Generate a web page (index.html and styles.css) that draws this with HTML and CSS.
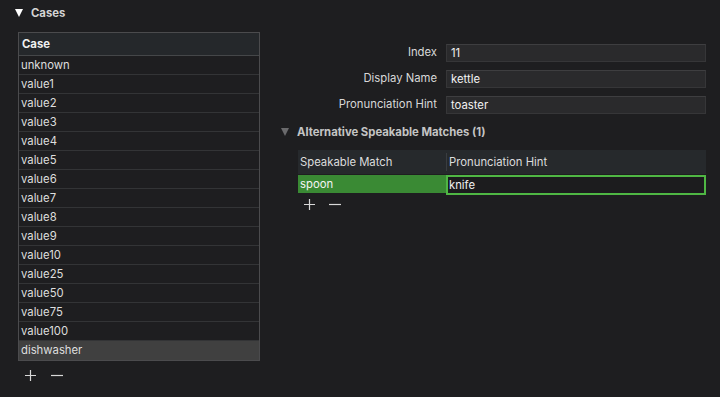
FILE: index.html
```html
<!DOCTYPE html>
<html>
<head>
<meta charset="utf-8">
<link rel="stylesheet" href="styles.css">
</head>
<body>
<div class="section-head">
  <span class="tri"></span><span class="section-title">Cases</span>
</div>
<div class="main">
  <div class="left">
    <div class="table">
      <div class="thead">Case</div>
      <div class="row">unknown</div>
      <div class="row">value1</div>
      <div class="row">value2</div>
      <div class="row">value3</div>
      <div class="row">value4</div>
      <div class="row">value5</div>
      <div class="row">value6</div>
      <div class="row">value7</div>
      <div class="row">value8</div>
      <div class="row">value9</div>
      <div class="row">value10</div>
      <div class="row">value25</div>
      <div class="row">value50</div>
      <div class="row">value75</div>
      <div class="row">value100</div>
      <div class="row selected">dishwasher</div>
    </div>
    <div class="pm left-pm">
      <svg width="12" height="12" viewBox="0 0 12 12"><path d="M0 6.5H11M5.5 1V12" stroke="#d8d8d8" stroke-width="1.2" fill="none"/></svg>
      <svg width="13" height="12" viewBox="0 0 13 12"><path d="M0 6.5H12" stroke="#d8d8d8" stroke-width="1.2" fill="none"/></svg>
    </div>
  </div>
  <div class="right">
    <div class="form">
      <label class="lbl">Index</label><div class="field">11</div>
      <label class="lbl">Display Name</label><div class="field">kettle</div>
      <label class="lbl">Pronunciation Hint</label><div class="field">toaster</div>
    </div>
    <div class="sub-head">
      <span class="tri dim"></span><span class="sub-title">Alternative Speakable Matches (1)</span>
    </div>
    <div class="subtable">
      <div class="sthead">
        <div class="c1">Speakable Match</div>
        <div class="c2">Pronunciation Hint</div>
      </div>
      <div class="strow">
        <div class="c1 green">spoon</div>
        <div class="c2 edit">knife</div>
      </div>
    </div>
    <div class="pm right-pm">
      <svg width="12" height="12" viewBox="0 0 12 12"><path d="M0 6.5H11M5.5 1V12" stroke="#d8d8d8" stroke-width="1.2" fill="none"/></svg>
      <svg width="13" height="12" viewBox="0 0 13 12"><path d="M0 6.5H12" stroke="#d8d8d8" stroke-width="1.2" fill="none"/></svg>
    </div>
  </div>
</div>
</body>
</html>
```
FILE: styles.css
```css
html, body {
  margin: 0;
  padding: 0;
  background: #1e1e20;
  color: #dcdcdc;
  font-family: "Inter", "Liberation Sans", sans-serif;
  font-size: 11.3px;
  width: 720px;
  height: 397px;
  overflow: hidden;
}
.section-head {
  display: flex;
  align-items: center;
  height: 16px;
  padding: 5px 0 0 15px;
}
.tri {
  width: 0;
  height: 0;
  border-left: 4.5px solid transparent;
  border-right: 4.5px solid transparent;
  border-top: 8px solid #ffffff;
  margin-right: 8px;
}
.tri.dim {
  border-top-color: #6a6a6c;
}
.section-title {
  font-weight: 700;
  color: #d4d4d4;
}
.main {
  display: flex;
  margin-top: 11px;
}
.left {
  width: 242px;
  padding-left: 18px;
  flex: none;
}
.table {
  border: 1px solid #4b4b4d;
  background: #1e1e20;
}
.thead {
  height: 22px;
  line-height: 22px;
  background: #25282b;
  border-bottom: 1px solid #454749;
  font-weight: 700;
  padding-left: 3px;
  color: #f0f0f0;
}
.row {
  height: 18px;
  line-height: 18px;
  border-bottom: 1px solid #333436;
  padding-left: 2px;
  color: #dedede;
}
.row.selected {
  background: #404040;
  border-bottom-color: #404040;
}
.pm {
  display: flex;
  align-items: center;
}
.left-pm {
  gap: 14px;
  padding: 8px 0 0 7px;
}
.right {
  flex: 1;
  padding-right: 14px;
  padding-top: 12px;
}
.form {
  display: grid;
  grid-template-columns: 1fr 260px;
  column-gap: 9px;
  row-gap: 8px;
  grid-auto-rows: 18px;
}
.lbl {
  text-align: right;
  line-height: 17px;
  color: #d8d8d8;
}
.field {
  box-sizing: border-box;
  background: #2a2a2c;
  border: 1px solid #363638;
  border-top-color: #3e3e40;
  line-height: 16px;
  padding-left: 4px;
  color: #f2f2f2;
}
.sub-head {
  display: flex;
  align-items: center;
  margin-top: 10px;
  padding-left: 21px;
  height: 16px;
}
.sub-title {
  font-weight: 700;
  color: #c4c4c4;
}
.subtable {
  margin: 10px 0 0 38px;
}
.sthead {
  display: flex;
  height: 24px;
  background: #26292c;
  border-bottom: 1px solid #1e1e20;
}
.sthead .c1 {
  width: 146px;
  padding-left: 2px;
  border-right: 1px solid #3a3d40;
  margin: 3px 0;
  line-height: 18px;
  color: #dcdcdc;
}
.sthead .c2 {
  flex: 1;
  line-height: 24px;
  padding-left: 2px;
  color: #dcdcdc;
}
.strow {
  display: flex;
  height: 20px;
}
.strow .c1 {
  width: 146px;
  height: 18px;
  line-height: 18px;
  padding-left: 2px;
  background: #3a8a34;
  color: #f4f4f4;
}
.strow .c2 {
  flex: 1;
  box-sizing: border-box;
  height: 20px;
  border: 2px solid #4fb744;
  background: #1c1c1e;
  line-height: 16px;
  padding-left: 1px;
  color: #f0f0f0;
}
.right-pm {
  gap: 13px;
  padding: 3px 0 0 44px;
}
```
